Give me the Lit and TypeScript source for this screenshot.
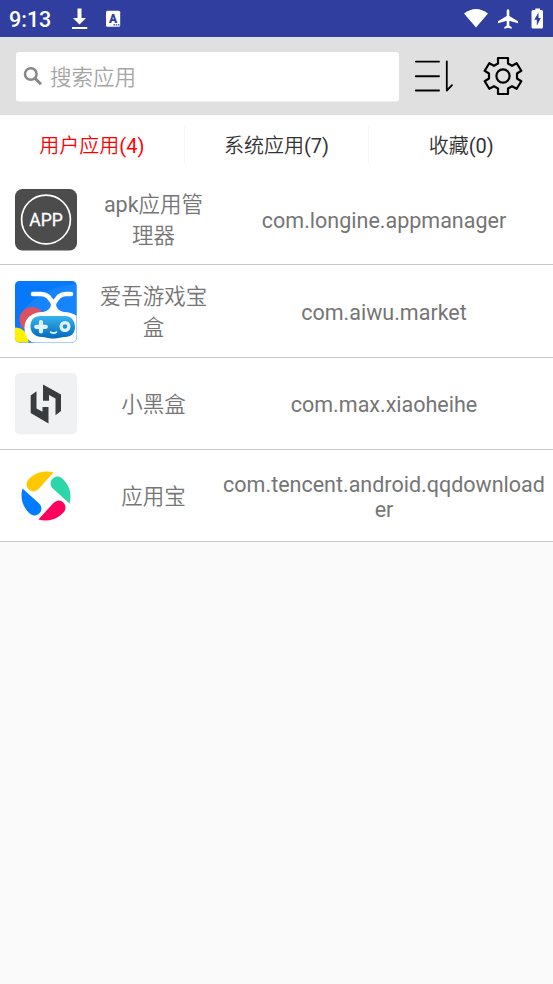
import { LitElement, html, css, svg } from "lit";
import { customElement, state } from "lit/decorators.js";
import { classMap } from "lit/directives/class-map.js";

const petal = "M38.500 6.500A24.300 24.300 0 0 0 12.900 14.300A6.900 6.900 0 0 0 24 22.600Z";

const appIcons = {
  manager: svg`
    <rect width="62" height="61.5" rx="7.5" fill="#4c4c4c"/>
    <circle cx="31" cy="30.5" r="24.4" fill="none" stroke="#fff" stroke-width="1.7"/>
    <text x="31" y="37" text-anchor="middle" textLength="33.500" lengthAdjust="spacingAndGlyphs" font-family="Roboto, sans-serif" font-size="18" fill="#fff" stroke="#fff" stroke-width=".3">APP</text>`,
  aiwu: svg`
    <defs>
      <clipPath id="clip"><rect width="61.5" height="61.5" rx="4.5"/></clipPath>
      <linearGradient id="pad" x1="0" y1="0" x2="0" y2="1"><stop offset="0" stop-color="#36b4ec"/><stop offset="1" stop-color="#0568bd"/></linearGradient>
    </defs>
    <g clip-path="url(#clip)">
      <rect width="62" height="62" fill="#0878fb"/>
      <path d="M5 36C16 14 40 4 62 3V62H5z" fill="#1684fd"/>
      <circle cx="17" cy="38.500" r="12.5" fill="#dc5263"/>
      <circle cx="0" cy="60" r="13.500" fill="#fff000"/>
      <path d="M18 13H26C32 13 34 16 38 22M56 13H51C45 13 43 16 39 22" fill="none" stroke="#fff" stroke-width="4.600" stroke-linecap="round"/>
      <path d="M35.800 21Q37 29 28 31C17 31 9.500 37 9.500 46.500C9.500 56 14 62 22 62H57Q62 60 62 56V35Q56 31 49 31Q40 29 41.200 21z" fill="#fff"/>
      <path d="M26 35H50C56 35 60 39.500 60 46C60 52.500 56 56 50 56C46 56 44 57.500 38 57.500C32 57.500 31 56 27 56C20 56 15.500 51.500 15.500 45.500C15.500 39 19 35 26 35z" fill="url(#pad)"/>
      <path d="M26 41V50.500M21.200 45.800H30.800" stroke="#dff4ff" stroke-width="4.200" stroke-linecap="round"/>
      <circle cx="50" cy="45.500" r="3.900" fill="none" stroke="#dff4ff" stroke-width="3.200"/>
      <path d="M35.500 51Q38.500 53.300 41.500 51" fill="none" stroke="#dff4ff" stroke-width="1.600" stroke-linecap="round"/>
    </g>`,
  heybox: svg`
    <rect width="62" height="61.500" rx="5" fill="#f0f1f3"/>
    <path d="M28 11.500L46 21.500V38L40.500 42.300V25.500L34 22V27.800H28z M21.500 18.300V35.500L27.500 38.800V34H33.500V50.500L15.700 40V22.500z" fill="#383c3e"/>`,
  yyb: svg`
    <path d=${petal} fill="#ffc800"/>
    <path d=${petal} transform="rotate(90 31 30)" fill="#2bd6a9"/>
    <path d=${petal} transform="rotate(180 31 30)" fill="#ff005c"/>
    <path d=${petal} transform="rotate(270 31 30)" fill="#007dff"/>`,
};

@customElement("app-root")
export class AppRoot extends LitElement {
  @state() private active = 0;

  private tabs = ["用户应用(4)", "系统应用(7)", "收藏(0)"];

  private apps = [
    { name: "apk应用管理器", id: "com.longine.appmanager", icon: appIcons.manager },
    { name: "爱吾游戏宝盒", id: "com.aiwu.market", icon: appIcons.aiwu },
    { name: "小黑盒", id: "com.max.xiaoheihe", icon: appIcons.heybox },
    { name: "应用宝", id: "com.tencent.android.qqdownloader", icon: appIcons.yyb },
  ];

  static styles = css`
    :host {
      display: block;
      height: 100vh;
      overflow: hidden;
      background: #fafafa;
      font-family: Roboto, "Noto Sans CJK SC DemiLight", "Noto Sans CJK SC", sans-serif;
    }
    * { box-sizing: border-box; }
    svg { display: block; flex: none; }
    .status {
      height: 37px;
      display: flex;
      align-items: center;
      background: #303f9f;
      color: #fff;
      padding: 0 9px;
    }
    .time { width: 61px; font-size: 21.500px; font-weight: 500; line-height: 37px; padding-top: 1px; }
    .spacer { flex: 1; }
    .toolbar {
      height: 78px;
      display: flex;
      align-items: center;
      padding: 0 30px 0 16px;
      background: #e0e0e0;
    }
    .search {
      width: 383px;
      height: 49px;
      display: flex;
      align-items: center;
      padding-left: 7px;
      background: #fff;
      border-radius: 3px;
      color: #a6a6a6;
      font-size: 21.500px;
      box-shadow: 0 1px 0 #ededed;
    }
    .hint { margin: 0 0 2px 7px; }
    .sort { margin-left: 15px; }
    .gear { margin-left: 29px; }
    .tabs { height: 58px; display: flex; align-items: center; background: #fff; border-top: 1px solid #f8f8f8; }
    .tab {
      flex: 1;
      height: 37px;
      display: flex;
      align-items: center;
      justify-content: center;
      font-size: 20px;
      color: #333;
    }
    .tab + .tab { border-left: 1px solid #f5f5f5; }
    .active { color: #f00; }
    .row {
      height: 92.300px;
      display: grid;
      grid-template-columns: 92px 123px 1fr;
      align-items: center;
      background: #fff;
      border-bottom: 1px solid #c8c8c8;
      color: #757575;
      font-size: 21.500px;
      text-align: center;
      padding-top: 2px;
    }
    .icon { margin-left: 15px; }
    .name { padding: 1px 7px 0; line-height: 31.500px; }
    .id { padding: 1px 7px 0; line-height: 25px; word-break: break-all; }
  `;

  render() {
    return html`
      <div class="status">
        <span class="time">9:13</span>
        <svg width="19" height="22" viewBox="0 0 19 22" fill="#fff"><path d="M7.500 0.500h4v9.500h4.500l-6.500 6.500L3 10h4.500zM2 19h15.200v2H2z"/></svg>
        <svg width="32" height="20" viewBox="0 0 32 20"><rect x="17" y="1.800" width="14.200" height="16" rx="1.500" fill="#fff"/><text x="24" y="13.800" text-anchor="middle" font-family="Roboto, sans-serif" font-size="12" font-weight="900" fill="#303f9f">A</text><path d="M24.500 15.900h6" stroke="#303f9f" stroke-width="1.300" stroke-dasharray="1.500 .7"/></svg>
        <span class="spacer"></span>
        <svg width="80" height="22" viewBox="464 7.500 80 22" fill="#fff">
          <path d="M464 13Q476 4 488 13L476 27z"/>
          <path d="M506.700 10Q508 7 509.300 10V15.500L518 20.800V22.700L509.300 20.200V25L511.700 26.800V28.200L508 27.300 504.300 28.200V26.800L506.700 25V20.200L498 22.700V20.800L506.700 15.500z"/>
          <path d="M533 9.500h2.300V8h4.700v1.500h1.500q1.500 0 1.500 1.500v15.500q0 1.500-1.500 1.500h-8.500q-1.500 0-1.500-1.500V11q0-1.500 1.500-1.500z"/>
          <path d="M538.500 12l-4.200 7.200h2.500v6l4-7.700h-2.300z" fill="#303f9f"/>
        </svg>
      </div>
      <div class="toolbar">
        <div class="search">
          <svg width="20" height="20" viewBox="0 0 20 20" fill="none" stroke="#878787"><circle cx="7.800" cy="8" r="5.800" stroke-width="2.500"/><path d="M12 12.200L18 18.300" stroke-width="2.900"/></svg>
          <span class="hint">搜索应用</span>
        </div>
        <svg class="sort" width="40" height="34" viewBox="0 0 40 34" fill="none" stroke="#000" stroke-linecap="round" stroke-linejoin="round"><path d="M1.800 2.600H25M1.800 17.200H25M1.800 31.500H25" stroke-width="1.900"/><path d="M32.800 2.400V31.500L38 26.200" stroke-width="1.800"/></svg>
        <svg class="gear" width="40" height="40" viewBox="-20 -20 40 40" fill="none" stroke="#000" stroke-width="2.200" stroke-linejoin="round"><path d="M-5 -18H5V-12.500L9 -10.200L13.700 -12.800L18.300 -5.200L14 -2.500V2.500L18.300 5.200L13.700 12.800L9 10.200L5 12.500V18H-5V12.500L-9 10.200L-13.700 12.800L-18.300 5.200L-14 2.500V-2.500L-18.300 -5.200L-13.700 -12.800L-9 -10.200L-5 -12.500Z"/><circle r="6.600"/></svg>
      </div>
      <div class="tabs">
        ${this.tabs.map((t, i) => html`<div class=${classMap({ tab: true, active: i === this.active })} @click=${() => (this.active = i)}>${t}</div>`)}
      </div>
      ${this.apps.map((a) => html`
        <div class="row">
          <svg class="icon" width="62" height="62" viewBox="0 0 62 62">${a.icon}</svg>
          <div class="name">${a.name}</div>
          <div class="id">${a.id}</div>
        </div>`)}
    `;
  }
}
